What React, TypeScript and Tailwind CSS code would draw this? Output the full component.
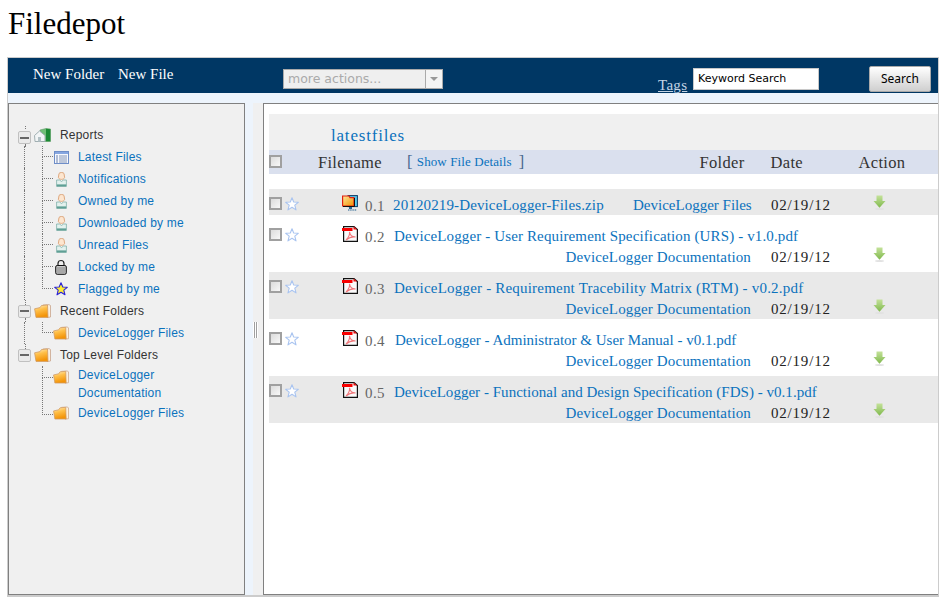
import React from "react";

const serif = "font-['Liberation_Serif',serif]";
const sans = "font-['Liberation_Sans',Arial,sans-serif]";

function Folder() {
  return (
    <svg width="17" height="14" viewBox="0 0 17 14" className="block">
      <defs>
        <linearGradient id="fg" x1="0" y1="0" x2="0.3" y2="1">
          <stop offset="0" stopColor="#fff3cf" />
          <stop offset="0.45" stopColor="#ffc04a" />
          <stop offset="1" stopColor="#f39408" />
        </linearGradient>
      </defs>
      <path d="M9 1 L15 .6 L16.5 1.5 V13 L13 13.6 Z" fill="#fbf1e2" stroke="#c9a58c" strokeWidth=".8" />
      <path d="M.6 4.8 L6 3.6 L7.5 1.5 L13.5 1 L14 13.4 H2 Z" fill="url(#fg)" stroke="#d09a62" strokeWidth=".8" strokeLinejoin="round" />
    </svg>
  );
}
function HomeIcon() {
  return (
    <svg width="17" height="14" viewBox="0 0 17 14" className="block">
      <path d="M6 2 L12 .5 L16.5 1 V13.5 H8 Z" fill="#6fbf76" stroke="#5f9a68" strokeWidth=".6" />
      <path d="M12 .8 L16.3 1.2 V13.3 H12 Z" fill="#1c8a34" />
      <path d="M.5 7.5 L5.5 3 L11 7.5 V13.5 H1 Z" fill="#f2f5f6" stroke="#97a7aa" strokeWidth=".9" strokeLinejoin="round" />
      <rect x="4" y="9" width="3" height="4.5" fill="#b4c2c6" />
    </svg>
  );
}
function ListIcon() {
  return (
    <svg width="15" height="13" viewBox="0 0 15 13" className="block">
      <rect x=".5" y=".5" width="14" height="12" fill="#f6f8fd" stroke="#6f8ec8" />
      <rect x="1" y="1" width="13" height="2" fill="#86a6e0" />
      {[4.5, 6.5, 8.5, 10.5].map((y) => (
        <g key={y}>
          <rect x="2" y={y} width="2" height="1" fill="#6a82b0" />
          <rect x="5" y={y} width="8" height="1" fill="#8496b8" />
        </g>
      ))}
    </svg>
  );
}
function Person() {
  return (
    <svg width="11" height="15" viewBox="0 0 11 15" className="block">
      <path d="M3 1.5 C3.5 .2 7.5 .2 8 1.5 L8.6 5.5 C8 8 3 8 2.4 5.5 Z" fill="#fde6d0" stroke="#d9a074" strokeWidth=".9" />
      <path d="M.6 8 H3.5 L5.5 9.5 L7.5 8 H10.4 V14.4 H.6 Z" fill="#e3f1ee" stroke="#7fb0a8" strokeWidth=".8" />
      <rect x=".8" y="12.4" width="9.4" height="2" fill="#5f9f95" />
    </svg>
  );
}
function Lock() {
  return (
    <svg width="12" height="16" viewBox="0 0 12 16" className="block">
      <path d="M3 7 V4.5 C3 .5 9 .5 9 4.5 V7" fill="#eeeeee" stroke="#222222" strokeWidth="1.2" />
      <rect x=".7" y="6.5" width="10.6" height="8.8" rx="1.5" fill="#c8c8c8" stroke="#111111" />
      <path d="M1.5 9 H10.5 M1.5 11 H10.5 M1.5 13 H10.5" stroke="#777777" strokeWidth=".8" />
    </svg>
  );
}
function FlagStar() {
  return (
    <svg width="14" height="14" viewBox="0 0 14 14" className="block">
      <path d="M7 .8 L8.8 5 L13.3 5.3 L9.8 8.2 L11 12.8 L7 10.2 L3 12.8 L4.2 8.2 L.7 5.3 L5.2 5 Z" fill="#ffee30" stroke="#2a22d8" strokeWidth="1.1" strokeLinejoin="round" />
    </svg>
  );
}
function Toggle() {
  return (
    <div className="flex h-[13px] w-[13px] shrink-0 items-center justify-center rounded-[2px] border border-[#c0c0c0] bg-[#eaeaea]">
      <div className="h-[2px] w-[9px] bg-[#666666]" />
    </div>
  );
}
function Checkbox({ className = "" }: { className?: string }) {
  return <div className={`h-[13px] w-[13px] shrink-0 border-2 border-[#a0a0a0] bg-gradient-to-br from-[#dcdcdc] to-[#f8f8f8] ${className}`} />;
}
function OutlineStar() {
  return (
    <svg width="14" height="14" viewBox="0 0 14 14" className="block shrink-0">
      <path d="M7 .8 L8.7 5 L13.3 5.3 L9.8 8.2 L11 12.9 L7 10.3 L3 12.9 L4.2 8.2 L.7 5.3 L5.3 5 Z" fill="#ffffff" stroke="#a9c4f0" strokeWidth="1.1" strokeLinejoin="round" />
    </svg>
  );
}
function Pdf() {
  return (
    <svg width="16" height="16" viewBox="0 0 16 16" className="block shrink-0">
      <path d="M1.6 .6 H12 L15.4 3.6 V15.4 H1.6 Z" fill="#fafafa" stroke="#111111" strokeWidth="1.2" />
      <rect x="0" y="2" width="10.5" height="3" fill="#f80000" />
      <path d="M11.5 .6 L15.4 3.6 L11.5 3.6 Z" fill="#e01010" />
      <path d="M4 14 C6 12 8 9 7.5 5.8 C8 9 10.5 11 13.5 11 C10.5 10.4 6.5 12 4 14 Z" fill="none" stroke="#f0787c" strokeWidth="1.1" />
    </svg>
  );
}
function Zip() {
  return (
    <svg width="16" height="16" viewBox="0 0 16 16" className="block shrink-0">
      <defs>
        <linearGradient id="zg" x1="0" y1="0" x2="1" y2="1">
          <stop offset="0" stopColor="#ffe79a" />
          <stop offset="1" stopColor="#f09000" />
        </linearGradient>
      </defs>
      <rect x="6" y=".6" width="9.4" height="11" fill="#58c8ec" stroke="#0a3a66" />
      <rect x="7" y="12" width="3" height="2" fill="#2a6a9a" />
      <path d="M6 15 H15" stroke="#1a5a8a" strokeWidth="1.2" strokeDasharray="1.4 .8" />
      <path d="M.6 1 H7 L8 2.6 H12 V11 H.6 Z" fill="url(#zg)" stroke="#e02010" strokeWidth="1.2" />
      <path d="M12.5 3 V11.5 H1" fill="none" stroke="#111111" strokeWidth="1" />
    </svg>
  );
}
function DownArrow() {
  return (
    <svg width="13" height="15" viewBox="0 0 13 15" className="block shrink-0">
      <defs>
        <linearGradient id="ar" x1="0" y1="0" x2="0" y2="1">
          <stop offset="0" stopColor="#c4e29a" />
          <stop offset="1" stopColor="#7fb84c" />
        </linearGradient>
      </defs>
      <path d="M3.5 .5 H9.5 V6 H12.5 L6.5 12.8 L.5 6 H3.5 Z" fill="url(#ar)" />
      <ellipse cx="6.5" cy="14" rx="4.5" ry="1" fill="#e2e2e2" />
    </svg>
  );
}

function Root({ label, icon, first, last }: { label: string; icon: React.ReactNode; first?: boolean; last?: boolean }) {
  return (
    <div className="flex h-[22px] items-center">
      <div className="flex h-full w-[13px] shrink-0 flex-col items-center">
        <div className={first ? "ml-[1px] mt-[2px] h-[3px] flex-none border-l border-dotted border-[#777777]" : "ml-[1px] flex-1 border-l border-dotted border-[#777777]"} />
        {first ? <div className="flex-1" /> : null}
        <Toggle />
        <div className={last ? "flex-1" : "ml-[1px] flex-1 border-l border-dotted border-[#777777]"} />
      </div>
      <div className="ml-[3px] w-[17px] shrink-0">{icon}</div>
      <span className="ml-[9px] text-[#333333]">{label}</span>
    </div>
  );
}

function Child({
  icon,
  last,
  parentLine = true,
  h = "h-[22px]",
  top = "h-[11px]",
  two,
  children,
}: {
  icon: React.ReactNode;
  last?: boolean;
  parentLine?: boolean;
  h?: string;
  top?: string;
  two?: boolean;
  children: React.ReactNode;
}) {
  return (
    <div className={`flex ${h}`}>
      <div className="w-[13px] shrink-0">
        <div className={parentLine ? "ml-[6px] h-full border-l border-dotted border-[#777777]" : ""} />
      </div>
      <div className="ml-[11px] w-[11px] shrink-0">
        <div className={`${top} border-b border-l border-dotted border-[#777777]`} />
        {last ? null : <div className="h-[calc(100%-11px)] border-l border-dotted border-[#777777]" />}
      </div>
      <div className={`flex w-[25px] shrink-0 ${two ? "pt-[4px]" : "items-center"}`}>
        <div className="flex w-[16px] justify-center">{icon}</div>
      </div>
      <a className={`self-center leading-[18px] text-[#0b72bd] ${two ? "-mt-[2px]" : ""}`}>{children}</a>
    </div>
  );
}

function Sidebar() {
  return (
    <div className={`w-[237px] shrink-0 overflow-hidden border border-[#808080] bg-[#f0f0f0] pl-[9px] pt-[20px] text-[12px] tracking-[0.2px] ${sans}`}>
      <Root first label="Reports" icon={<HomeIcon />} />
      <Child icon={<ListIcon />}>Latest Files</Child>
      <Child icon={<Person />}>Notifications</Child>
      <Child icon={<Person />}>Owned by me</Child>
      <Child icon={<Person />}>Downloaded by me</Child>
      <Child icon={<Person />}>Unread Files</Child>
      <Child icon={<Lock />}>Locked by me</Child>
      <Child last icon={<FlagStar />}>Flagged by me</Child>
      <Root label="Recent Folders" icon={<Folder />} />
      <Child last icon={<Folder />}>DeviceLogger Files</Child>
      <Root last label="Top Level Folders" icon={<Folder />} />
      <Child two parentLine={false} h="h-[38px]" top="h-[12px]" icon={<Folder />}>
        DeviceLogger<br />Documentation
      </Child>
      <Child parentLine={false} last h="h-[18px]" icon={<Folder />}>DeviceLogger Files</Child>
    </div>
  );
}

type RowData = {
  v: string;
  name: string;
  gray: boolean;
  nameGap: string;
  track: string;
};

const rows: RowData[] = [
  { v: "0.2", name: "DeviceLogger - User Requirement Specification (URS) - v1.0.pdf", gray: false, nameGap: "ml-[9px]", track: "tracking-[0.13px]" },
  { v: "0.3", name: "DeviceLogger - Requirement Tracebility Matrix (RTM) - v0.2.pdf", gray: true, nameGap: "ml-[9px]", track: "tracking-[0.2px]" },
  { v: "0.4", name: "DeviceLogger - Administrator & User Manual - v0.1.pdf", gray: false, nameGap: "ml-[10px]", track: "tracking-[0px]" },
  { v: "0.5", name: "DeviceLogger - Functional and Design Specification (FDS) - v0.1.pdf", gray: true, nameGap: "ml-[9px]", track: "tracking-[0.03px]" },
];

const link = "text-[#0b72bd]";

function Leading({ icon, v }: { icon: React.ReactNode; v: string }) {
  return (
    <>
      <Checkbox />
      <div className="ml-[3px]"><OutlineStar /></div>
      <div className="ml-[43px] -mt-[2px]">{icon}</div>
      <span className="ml-[7px] -mt-[1px] w-[20px] shrink-0 text-[15px] leading-[20px] tracking-[0.4px] text-[#666666]">{v}</span>
    </>
  );
}

function MultiRow({ r }: { r: RowData }) {
  return (
    <div className={`flex ${r.gray ? "h-[47px] bg-[#e9e9e9] pt-[8px]" : "h-[57px] pt-[13px]"}`}>
      <Leading icon={<Pdf />} v={r.v} />
      <div className="-mt-[3px] flex flex-col">
        <div className={`flex h-[22px] items-center ${r.nameGap} whitespace-nowrap ${link} text-[15px] ${r.track}`}>{r.name}</div>
        <div className="ml-[9px] flex h-[21px] items-center text-[15px] tracking-[0.13px] whitespace-nowrap">
          <span className={`${link} w-[357px] text-right`}>DeviceLogger Documentation</span>
          <span className="ml-[20px] w-[83px] tracking-[0.8px] text-[#222222]">02/19/12</span>
          <div className="ml-[19px] -mt-[6px]"><DownArrow /></div>
        </div>
      </div>
    </div>
  );
}

function Main() {
  return (
    <div className={`min-w-0 flex-1 border-y border-l border-y-[#808080] border-l-[#808080] bg-white pl-[5px] pt-[10px] ${serif}`}>
      <div className="flex h-[36px] items-end bg-[#f0f0f0] pb-[4px] pl-[62px] text-[17px] leading-[20px] tracking-[0.8px] text-[#0b72bd]">latestfiles</div>
      <div className="flex h-[24px] items-center bg-[#dae0ee] text-[16.5px] tracking-[0.3px] text-[#333333]">
        <Checkbox className="-mt-[1px]" />
        <span className="ml-[36px] w-[89px] pt-[2px]">Filename</span>
        <span className="text-[#4a6a90]">[</span>
        <span className={`ml-[4px] -mt-[1px] w-[102px] text-[13px] tracking-[0.1px] whitespace-nowrap ${link}`}>Show File Details</span>
        <span className="text-[#4a6a90]">]</span>
        <span className="ml-[175px] w-[71px] pt-[2px]">Folder</span>
        <span className="w-[88px] pt-[2px]">Date</span>
        <span className="pt-[2px]">Action</span>
      </div>
      <div className="h-[15px]" />
      <div className="flex h-[26px] bg-[#e9e9e9] pt-[8px]">
        <Leading icon={<Zip />} v="0.1" />
        <div className="flex h-[16px] items-center text-[15px] tracking-[0.13px] whitespace-nowrap">
          <span className={`ml-[8px] w-[240px] ${link}`}>20120219-DeviceLogger-Files.zip</span>
          <span className={`w-[118px] text-right tracking-[0px] ${link}`}>DeviceLogger Files</span>
          <span className="ml-[20px] w-[83px] tracking-[0.8px] text-[#222222]">02/19/12</span>
          <div className="ml-[19px] -mt-[6px]"><DownArrow /></div>
        </div>
      </div>
      {rows.map((r) => (
        <MultiRow key={r.v} r={r} />
      ))}
    </div>
  );
}

function Toolbar() {
  return (
    <div className={`flex h-[35px] shrink-0 items-start bg-[#003764] ${serif}`}>
      <a className="ml-[25px] mt-[7px] w-[72px] text-[15px] leading-[18px] text-white whitespace-nowrap">New Folder</a>
      <a className="ml-[13px] mt-[7px] w-[54px] text-[15px] leading-[18px] text-white whitespace-nowrap">New File</a>
      <div className="ml-[111px] mt-[11px] flex h-[20px] w-[160px] items-center justify-between border border-[#aaaaaa] bg-[#efefef] pl-[4px]">
        <span className="font-['DejaVu_Sans',sans-serif] text-[12.5px] text-[#aaaaaa]">more actions...</span>
        <div className="flex h-[18px] w-[17px] items-center justify-center border-l border-[#aaaaaa] bg-[#f4f4f4]">
          <div className="h-0 w-0 border-x-[4px] border-t-[4px] border-x-transparent border-t-[#999999]" />
        </div>
      </div>
      <a className="ml-[215px] mt-[18px] w-[30px] text-[15px] leading-[18px] tracking-[0.3px] text-[#c4d4e4] underline">Tags</a>
      <div className="ml-[5px] mt-[10px] flex h-[22px] w-[126px] items-center border border-[#c8c8c8] bg-white pl-[4px] font-['DejaVu_Sans',sans-serif] text-[11px] text-black">Keyword Search</div>
      <button className="ml-[50px] mt-[8px] flex h-[26px] w-[62px] items-center justify-center rounded-[2px] border border-[#aaaaaa] bg-gradient-to-b from-white to-[#cfcfcf] font-['Noto_Sans',sans-serif] text-[12px] text-black">Search</button>
    </div>
  );
}

export default function App() {
  return (
    <div className={`h-[605px] w-[947px] overflow-hidden bg-white pl-[7px] ${serif}`}>
      <h1 className="flex h-[57px] items-start pl-[1px] pt-[5px] text-[31px] leading-[38px] text-black">Filedepot</h1>
      <div className="flex h-[540px] w-[932px] flex-col border border-b-2 border-[#cccccc]">
        <Toolbar />
        <div className="flex min-h-0 flex-1 bg-[#edf4fc] pt-[10px]">
          <Sidebar />
          <div className="flex w-[18px] shrink-0 items-stretch">
            <div className="w-[8px]" />
            <div className="flex flex-1 items-center bg-[#f0f0f0] pb-[38px]">
              <div className="flex h-[16px] w-[5px] justify-between bg-white px-[1px]">
                <div className="w-[1px] bg-[#a0a0a0]" />
                <div className="w-[1px] bg-[#a0a0a0]" />
              </div>
            </div>
          </div>
          <Main />
        </div>
      </div>
    </div>
  );
}
